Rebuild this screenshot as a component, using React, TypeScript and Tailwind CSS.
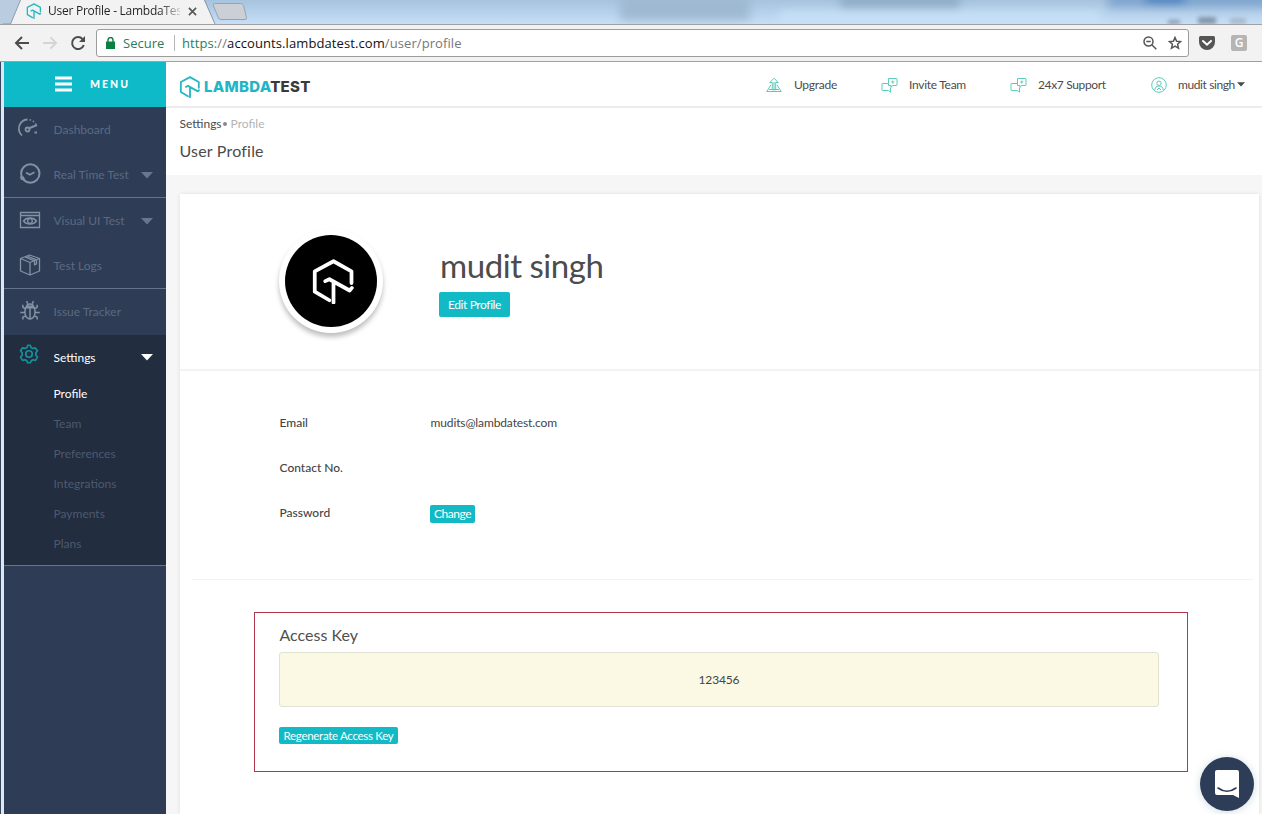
import React from "react";

type IconProps = { className?: string };

const hexPaths = (
  <>
    <path d="M9.800 22 2 17.400V6.600L12 1.200l9.600 5.400v6.200" />
    <path d="M7.600 11.800 9.800 10.800 20.600 16.800 21.800 15.400M12 12.200v11" />
  </>
);

function HexLogo({ className, weight = 2.2 }: IconProps & { weight?: number }) {
  return (
    <svg viewBox="0 0 24 24" className={className} fill="none" stroke="currentColor" strokeWidth={weight} strokeLinejoin="round" strokeLinecap="round">
      {hexPaths}
    </svg>
  );
}

function Caret({ className }: IconProps) {
  return (
    <svg viewBox="0 0 12 7" className={className} fill="currentColor">
      <path d="M0 0h12L6 6.500z" />
    </svg>
  );
}

const line = { fill: "none", stroke: "currentColor", strokeWidth: 1.3 } as const;

function GaugeIcon() {
  return (
    <svg viewBox="0 0 22 22" className="-ml-[5px] -mt-[4px] h-[22px] w-[22px]" {...line}>
      <path d="M5 18.500C1.500 15.500 .8 10.500 3.200 6.800 5 4 7.500 2.600 10.500 2.500" strokeWidth="1.800" />
      <path d="M12.500 2.700c3.500.7 6 3 7 5.800" strokeDasharray="1.500 2" strokeWidth="1.500" />
      <path d="m11.500 11.500 8.500-3.500M17.500 15.500h2.500" strokeWidth="2" />
      <circle cx="10.500" cy="12.500" r="2" strokeWidth="1.800" />
    </svg>
  );
}

function ClockIcon() {
  return (
    <svg viewBox="0 0 22 22" className="-mt-[2px] h-[22px] w-[22px]" {...line}>
      <circle cx="11.300" cy="10.500" r="9.200" strokeWidth="2" />
      <path d="M.8 13.500h4l1.500 3.500H2z" fill="currentColor" stroke="none" />
      <path d="m7 9.500 3.800 2.300 4.700-2.500" strokeWidth="1.800" />
    </svg>
  );
}

function EyeWindowIcon() {
  return (
    <svg viewBox="0 0 22 22" className="-mt-px h-[22px] w-[22px]" {...line}>
      <path d="M1.500 3.500h19v15h-19zM1.500 6.500h19" />
      <path d="M4.500 12c3-4 10-4 13 0-3 4-10 4-13 0z" />
      <circle cx="11" cy="12" r="2.300" />
    </svg>
  );
}

function BoxIcon() {
  return (
    <svg viewBox="0 0 22 22" className="-mt-[2px] h-[22px] w-[22px]" {...line} strokeLinejoin="round">
      <path d="M1.500 4.500 10.500 1l10 3.500v12.500L11 21l-9.500-4zM1.500 4.500 11 8.500l9.500-4M11 8.500V21M6 2.800l9.500 4v4l2-1V5.800L8 2" />
    </svg>
  );
}

function BugIcon() {
  return (
    <svg viewBox="0 0 22 22" className="-mt-[2px] h-[21px] w-[22px]" {...line} strokeWidth={1.600}>
      <path d="M7.500 6.500C8 3.500 14 3.500 14.500 6.500zM8.500 4 7.500 1M13.500 4l1-3" />
      <path d="M6.500 8h9c1.500 4 1.500 11-4.500 12C5 19 5 12 6.500 8zM11 9v10M6.300 9.500 3.500 7.500V5M15.700 9.500l2.800-2V5M5.500 13H.8M16.500 13h4.700M6.300 16.500 3.500 18v2.500M15.700 16.500l2.800 1.500v2.500" />
    </svg>
  );
}

function GearIcon() {
  return (
    <svg viewBox="0 0 24 24" className="-ml-[3px] -mt-[7px] h-[20px] w-[20px] text-[#14929b]" fill="none" stroke="currentColor" strokeWidth="2" strokeLinejoin="round">
      <path d="M9.700 4.100 10.500 1.500h3l.8 2.600 2.300 1.300 2.900-.7L22.200 8l-2 2.500v3l2 2.300-2.400 3.800-3-.7-2.200 1.300-.9 2.300h-3.400l-.9-2.300-2.300-1.300-2.900.7L1.800 15.800l2-2.300v-3L1.800 8l2.400-3.400 3 .7z" />
      <circle cx="12" cy="12" r="3.900" />
    </svg>
  );
}

function UpgradeIcon() {
  return (
    <svg viewBox="0 0 16 16" className="h-[16px] w-[16px] text-[#5accb5]" fill="none" stroke="currentColor" strokeWidth="1">
      <path d="M8 1.200 3.800 5.500h2.500v7.300h3.400V5.500h2.500zM8 5v7.500M4.800 8 .8 14.500h14.400L11.200 8M3 12.500h10" />
    </svg>
  );
}

function ChatIcon() {
  return (
    <svg viewBox="0 0 17 16" className="h-[16px] w-[17px] text-[#5accb8]" fill="none" stroke="currentColor" strokeWidth="1">
      <path d="M7.500 1.500h8q.5 0 .5.500v6q0 .5-.5.500h-4l-1.500 2v-2H7.500zM7.500 6.500H1.500q-.5 0-.5.500v6q0 .5.500.5h6l2 1.700v-4.500M11.800 3.500v3M10.300 5h3" />
    </svg>
  );
}

function UserIcon() {
  return (
    <svg viewBox="0 0 16 16" className="h-[16px] w-[16px] text-[#5accb8]" fill="none" stroke="currentColor" strokeWidth="1">
      <circle cx="8" cy="8" r="7.300" />
      <circle cx="8" cy="6.300" r="2.200" />
      <path d="M3.800 13c.2-2.500 1.500-4 4.200-4s4 1.500 4.200 4M6 13l2-2 2 2" />
    </svg>
  );
}

function Tab() {
  return (
    <div className="relative flex h-[24px] shrink-0 items-start overflow-hidden bg-[linear-gradient(180deg,#a7c3dd_0%,#b4cfe9_45%,#c6dff7_100%)]">
      <svg className="absolute inset-0" width="1262" height="24" viewBox="0 0 1262 24">
        <defs>
          <filter id="soft" x="-20%" y="-60%" width="140%" height="220%">
            <feGaussianBlur stdDeviation="5" />
          </filter>
          <filter id="faint" x="-50%" y="-100%" width="200%" height="300%">
            <feGaussianBlur stdDeviation="2" />
          </filter>
        </defs>
        <g filter="url(#soft)">
          <rect x="620" y="-6" width="130" height="26" fill="#9fb9d3" />
          <rect x="840" y="-8" width="120" height="16" fill="#91adc8" />
          <rect x="1108" y="-8" width="170" height="15" fill="#7ea5cf" />
          <rect x="1145" y="-6" width="40" height="9" fill="#3978bd" />
          <rect x="780" y="12" width="320" height="10" fill="#c8e2f9" />
        </g>
        <g filter="url(#faint)">
          <path d="M1168 20h12v4h-12zM1198 17h18v7h-18z" fill="#8296ab" />
          <path d="M1230 18h16v6h-16z" fill="#a7b7c9" />
        </g>
        <path d="M0 0h20L10 24H0z" fill="#b9cce0" />
        <path d="M10 24.500 20 0H204l11 24.500z" fill="#f2f2f2" />
        <path d="M3 24h7.500L20.500 0M204.500 0l10.500 24" fill="none" stroke="#8b97a5" />
        <path d="M214.500 3.500h26q2 0 3 2l3 12q.5 2-1.500 2h-24q-2 0-2.500-1.500l-5-12q-1-2.500 1-2.500z" fill="#cbd0d6" stroke="#98a3b1" />
      </svg>
      <div className="relative flex h-[22px] items-center pl-[26px]">
        <HexLogo className="h-[16px] w-[16px] text-[#26b9c0]" weight={2} />
        <span className="ml-[6px] w-[132px] whitespace-nowrap bg-[linear-gradient(90deg,#222_84%,#22222230_100%)] bg-clip-text font-['Open_Sans'] text-[12px] leading-[20px] tracking-[-0.260px] text-transparent">
          User Profile - LambdaTes
        </span>
        <svg viewBox="0 0 10 10" className="ml-[8px] h-[9px] w-[9px]" stroke="#555" strokeWidth="1.800">
          <path d="m1 1 8 8M9 1 1 9" />
        </svg>
      </div>
    </div>
  );
}

function Toolbar() {
  return (
    <div className="flex h-[38px] shrink-0 items-center border-b border-t border-[#a0a0a0] bg-[#f2f2f2]">
      <svg viewBox="0 0 16 14" className="ml-[14px] h-[14px] w-[16px]" fill="none" stroke="#4c4c4c" strokeWidth="2">
        <path d="M15 7H2M8 1 2 7l6 6" />
      </svg>
      <svg viewBox="0 0 16 14" className="ml-[13px] h-[14px] w-[15px]" fill="none" stroke="#d4d4d4" strokeWidth="2">
        <path d="M0 7h14M8 1l6 6-6 6" />
      </svg>
      <svg viewBox="0 0 16 16" className="ml-[12px] h-[16px] w-[16px]" fill="none" stroke="#4c4c4c" strokeWidth="2">
        <path d="M13.800 10A6 6 0 1 1 12.500 4L14.500 6" />
        <path d="M15 1v6H9z" fill="#4c4c4c" stroke="none" />
      </svg>
      <div className="ml-[10px] flex h-[28px] w-[1093px] items-center rounded-[3px] border border-[#9c9c9c] bg-white font-['Open_Sans'] text-[13px] leading-[20px]">
        <svg viewBox="0 0 9 12" className="ml-[9px] h-[12px] w-[9px]">
          <path d="M0 4.500h9V12H0z" fill="#0b8043" />
          <path d="M2 5V3a2.500 2.500 0 0 1 5 0v2" fill="none" stroke="#0b8043" strokeWidth="1.400" />
        </svg>
        <span className="ml-[8px] w-[41px] whitespace-nowrap text-[#2b7d5c]">Secure</span>
        <span className="ml-[10px] h-[16px] w-px bg-[#b5b5b5]" />
        <span className="ml-[7px] w-[280px] whitespace-nowrap tracking-[0.090px] text-[#777]">
          <span className="text-[#2b7d5c]">https</span>://<span className="text-[#111]">accounts.lambdatest.com</span>/user/profile
        </span>
        <svg viewBox="0 0 14 14" className="ml-auto h-[14px] w-[14px]" fill="none" stroke="#555" strokeWidth="1.500">
          <circle cx="5.500" cy="5.500" r="4.500" />
          <path d="m8.800 8.800 4.500 4.500M3.300 5.500h4.400" />
        </svg>
        <svg viewBox="0 0 14 14" className="ml-[11px] mr-[6px] h-[14px] w-[14px]" fill="none" stroke="#555" strokeWidth="1.500">
          <path d="m7 1.500 1.600 3.700 4 .4-3 2.700.9 4L7 10.200l-3.500 2.100.9-4-3-2.700 4-.4z" />
        </svg>
      </div>
      <svg viewBox="0 0 16 14" className="ml-[10px] h-[14px] w-[16px]">
        <path d="M1.500 0h13Q16 0 16 1.500V6A8 8 0 0 1 0 6V1.500Q0 0 1.500 0z" fill="#555" />
        <path d="m4 5 4 3.700L12 5" fill="none" stroke="#fff" strokeWidth="2" strokeLinecap="round" />
      </svg>
      <span className="ml-[16px] flex h-[16px] w-[16px] items-center justify-center rounded-[2px] bg-[#b5b5b5] font-['Open_Sans'] text-[12px] font-semibold leading-none text-white">G</span>
    </div>
  );
}

type ItemProps = { label: string; icon: React.ReactNode; caret?: boolean; divider?: boolean };

function SideItem({ label, icon, caret, divider }: ItemProps) {
  return (
    <div className={"flex h-[45.500px] items-center pl-[15px] text-[#5b6a83] " + (divider ? "border-b border-[#65738b]" : "")}>
      <span className="flex w-[22px] justify-center text-[#8490a3]">{icon}</span>
      <span className="ml-[12.500px] mt-px grow whitespace-nowrap text-[12px] leading-[16px]">{label}</span>
      {caret && <Caret className="mr-[13px] mt-px h-[7px] w-[12px] text-[#69778d]" />}
    </div>
  );
}

const settingsLinks = ["Team", "Preferences", "Integrations", "Payments", "Plans"];

function Sidebar() {
  return (
    <aside className="w-[162px] shrink-0 bg-[#2e3c56]">
      <div className="flex h-[45px] items-center bg-[#0ebac8] pl-[51px] text-white">
        <svg viewBox="0 0 17 16" className="-mt-px h-[16px] w-[17px]" fill="currentColor">
          <path d="M0 .5h17v3H0zM0 6.500h17v3H0zM0 12.500h17v3H0z" />
        </svg>
        <span className="-mt-px ml-[18px] text-[10.500px] font-black leading-[14px] tracking-[2px]">MENU</span>
      </div>
      <SideItem label="Dashboard" icon={<GaugeIcon />} />
      <SideItem label="Real Time Test" icon={<ClockIcon />} caret divider />
      <SideItem label="Visual UI Test" icon={<EyeWindowIcon />} caret />
      <SideItem label="Test Logs" icon={<BoxIcon />} divider />
      <SideItem label="Issue Tracker" icon={<BugIcon />} />
      <div className="h-[231.500px] border-b border-[#65738b] bg-[#222d40] text-[12px] leading-[16px] text-white">
        <div className="flex h-[45px] items-center pl-[15px]">
          <span className="flex w-[22px] justify-center">
            <GearIcon />
          </span>
          <span className="ml-[12.500px] mt-[2px] grow">Settings</span>
          <Caret className="mr-[13px] h-[7px] w-[12px]" />
        </div>
        <div className="flex flex-col gap-[14.200px] pl-[49.500px] pt-[6px]">
          <span>Profile</span>
          {settingsLinks.map((l) => (
            <span key={l} className="text-[#4d5a6e]">{l}</span>
          ))}
        </div>
      </div>
    </aside>
  );
}

function Header() {
  return (
    <header className="flex h-[46px] shrink-0 items-center border-b-2 border-[#ececec] bg-white pl-[13px] text-[12px] leading-[16px] text-[#4b4b4b]">
      <HexLogo className="mt-[5px] h-[22px] w-[22px] text-[#2ab7c4]" weight={2} />
      <span className="ml-[3px] mt-[6px] w-[108px] whitespace-nowrap font-['Inter'] text-[15px] font-extrabold leading-[18px] tracking-[0.270px] text-[#3a3a3c]">
        <span className="text-[#1fb6c6]">LAMBDA</span>TEST
      </span>
      <div className="ml-auto flex items-center pt-px tracking-[-0.280px]">
        <UpgradeIcon />
        <span className="ml-[12px] w-[43px] whitespace-nowrap">Upgrade</span>
        <span className="ml-[44px]"><ChatIcon /></span>
        <span className="ml-[11px] w-[57px] whitespace-nowrap">Invite Team</span>
        <span className="ml-[44px]"><ChatIcon /></span>
        <span className="ml-[11px] w-[68px] whitespace-nowrap tracking-[-0.350px]">24x7 Support</span>
        <span className="ml-[45px]"><UserIcon /></span>
        <span className="ml-[11px] w-[57px] whitespace-nowrap tracking-[-0.400px]">mudit singh</span>
        <Caret className="ml-[2px] mr-[17px] h-[5px] w-[8px]" />
      </div>
    </header>
  );
}

function ProfileCard() {
  return (
    <section className="flex grow flex-col bg-white shadow-[0_0_4px_rgba(0,0,0,0.1)]">
      <div className="flex h-[177px] shrink-0 border-b-2 border-[#f3f3f3] pl-[99px]">
        <div className="mt-[35px] flex h-[104px] w-[104px] items-center justify-center rounded-full bg-white shadow-[0_4px_5px_rgba(0,0,0,0.25)]">
          <div className="flex h-[92px] w-[92px] items-center justify-center rounded-full bg-black">
            <HexLogo className="ml-[5px] h-[45px] w-[45px] text-white" weight={2} />
          </div>
        </div>
        <div className="flex flex-col items-start pl-[56px] pt-[50px]">
          <h1 className="ml-px whitespace-nowrap text-[33px] leading-[42px] tracking-[-0.450px] text-[#4c4c4c]">mudit singh</h1>
          <button className="mt-[6px] h-[25px] w-[71px] whitespace-nowrap rounded-[2px] bg-[#11bac5] text-[12px] leading-[25px] tracking-[-0.400px] text-white">Edit Profile</button>
        </div>
      </div>
      <dl className="ml-[12px] mr-[6px] grid h-[209px] shrink-0 grid-cols-[151px_1fr] grid-rows-[45px_45px_45px] border-b border-[#f3f3f3] pl-[87.500px] pt-[43px] text-[12px] leading-[18px] text-[#444]">
        <dt className="font-medium">Email</dt>
        <dd className="tracking-[-0.120px]">mudits@lambdatest.com</dd>
        <dt className="font-medium">Contact No.</dt>
        <dd />
        <dt className="font-medium">Password</dt>
        <dd>
          <button className="-ml-[0.500px] mt-px h-[18px] w-[45px] rounded-[2px] bg-[#11bac5] text-[12px] leading-[18px] tracking-[-0.450px] text-white">Change</button>
        </dd>
      </dl>
      <div className="ml-[74px] mt-[32px] flex h-[160px] w-[934px] flex-col items-start border border-[#b2384f] pl-[24px] pt-[12px]">
        <h2 className="ml-[0.500px] text-[16px] leading-[20px] text-[#505050]">Access Key</h2>
        <div className="mt-[7px] flex h-[55px] w-[880px] items-center justify-center rounded-[3px] border border-[#dfe3cf] bg-[#fbf8e4] text-[12px] tracking-[-0.150px] text-[#444]">123456</div>
        <button className="mt-[20px] h-[17px] w-[119px] whitespace-nowrap rounded-[2px] bg-[#11bac5] text-[11.500px] leading-[17px] tracking-[-0.300px] text-white">Regenerate Access Key</button>
      </div>
    </section>
  );
}

export default function App() {
  return (
    <div className="relative flex h-[814px] w-[1262px] flex-col overflow-hidden bg-white font-['Lato',sans-serif]">
      <Tab />
      <Toolbar />
      <div className="flex min-h-0 grow">
        <div className="w-[4px] shrink-0 border-l border-[#39455a] bg-[#dbe7f3]" />
        <Sidebar />
        <main className="flex min-w-0 grow flex-col bg-[#f6f6f6]">
          <Header />
          <div className="h-[67px] shrink-0 bg-white pl-[13.500px] pt-[8px] text-[#4b4b4b]">
            <div className="flex items-center text-[12px] leading-[16px]">
              <span>Settings</span>
              <span className="ml-[1px] h-[4px] w-[4px] rounded-full bg-[#888]" />
              <span className="ml-[4px] text-[#b4b4b4]">Profile</span>
            </div>
            <div className="mt-[8px] text-[16px] leading-[22px] tracking-[0.200px]">User Profile</div>
          </div>
          <div className="flex grow flex-col pl-[14px] pr-[3px] pt-[19px]">
            <ProfileCard />
          </div>
        </main>
      </div>
      <button className="absolute left-[1200px] top-[757px] flex h-[54px] w-[54px] items-center justify-center rounded-full bg-[#2e3d57] shadow-[0_1px_8px_rgba(20,80,120,0.2)]">
        <svg viewBox="0 0 26 30" className="h-[30px] w-[26px]">
          <path d="M3 1h20q2 0 2 2v26l-6-3H3q-2 0-2-2V3q0-2 2-2z" fill="#fff" />
          <path d="M4 19q9 6.500 18 0" fill="none" stroke="#2e3d57" strokeWidth="1.600" strokeLinecap="round" />
        </svg>
      </button>
    </div>
  );
}
